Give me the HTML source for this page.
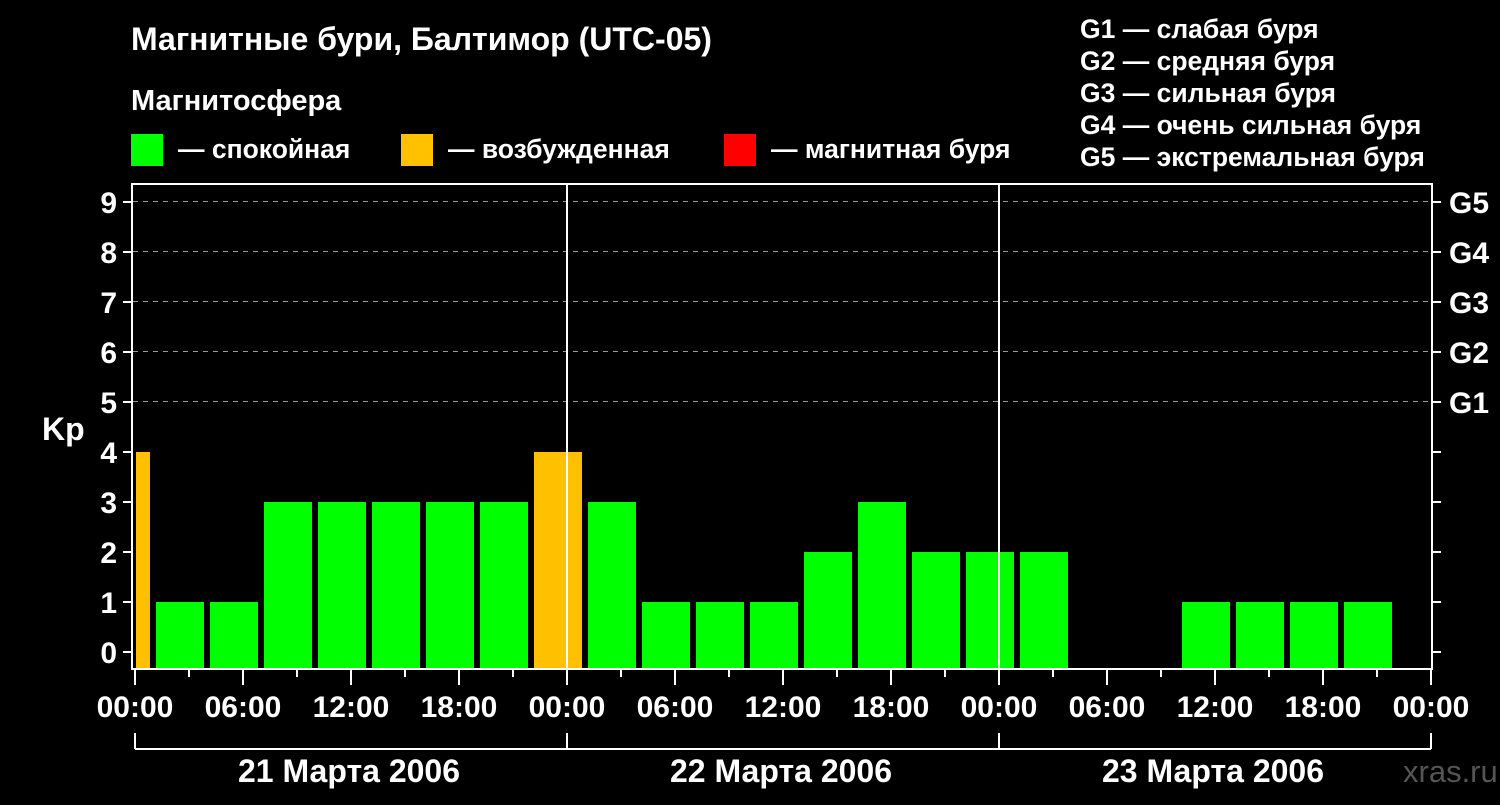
<!DOCTYPE html><html><head><style>body{margin:0;background:#000;width:1500px;height:800px;overflow:hidden}</style></head><body>
<svg width="1500" height="800" xmlns="http://www.w3.org/2000/svg" font-family="Liberation Sans, sans-serif" font-weight="bold" fill="#fff">
<rect width="1500" height="800" fill="#000"/>
<text x="131" y="50" font-size="32">Магнитные бури, Балтимор (UTC-05)</text>
<text x="131" y="110" font-size="29">Магнитосфера</text>
<rect x="131" y="134" width="32" height="32" fill="#00ff00"/><text x="178" y="158" font-size="26.5">— спокойная</text>
<rect x="401" y="134" width="32" height="32" fill="#ffc000"/><text x="448" y="158" font-size="26.5">— возбужденная</text>
<rect x="724" y="134" width="32" height="32" fill="#ff0000"/><text x="771" y="158" font-size="26.5">— магнитная буря</text>
<g font-size="26.5"><text x="1080" y="38">G1 — слабая буря</text><text x="1080" y="70">G2 — средняя буря</text><text x="1080" y="102">G3 — сильная буря</text><text x="1080" y="134">G4 — очень сильная буря</text><text x="1080" y="166">G5 — экстремальная буря</text></g>
<g stroke="#999" stroke-width="1" stroke-dasharray="5,5">
<line x1="133" y1="201.5" x2="1431" y2="201.5"/><line x1="133" y1="251.5" x2="1431" y2="251.5"/><line x1="133" y1="301.5" x2="1431" y2="301.5"/><line x1="133" y1="351.5" x2="1431" y2="351.5"/><line x1="133" y1="401.5" x2="1431" y2="401.5"/></g>
<g fill="#00ff00">
<rect x="156" y="602" width="48" height="66"/><rect x="210" y="602" width="48" height="66"/>
<rect x="264" y="502" width="48" height="166"/><rect x="318" y="502" width="48" height="166"/><rect x="372" y="502" width="48" height="166"/><rect x="426" y="502" width="48" height="166"/><rect x="480" y="502" width="48" height="166"/>
<rect x="588" y="502" width="48" height="166"/>
<rect x="642" y="602" width="48" height="66"/><rect x="696" y="602" width="48" height="66"/><rect x="750" y="602" width="48" height="66"/>
<rect x="804" y="552" width="48" height="116"/><rect x="858" y="502" width="48" height="166"/><rect x="912" y="552" width="48" height="116"/><rect x="966" y="552" width="48" height="116"/><rect x="1020" y="552" width="48" height="116"/>
<rect x="1182" y="602" width="48" height="66"/><rect x="1236" y="602" width="48" height="66"/><rect x="1290" y="602" width="48" height="66"/><rect x="1344" y="602" width="48" height="66"/>
</g>
<g fill="#ffc000"><rect x="136" y="452" width="14" height="216"/><rect x="534" y="452" width="48" height="216"/></g>
<g stroke="#fff" stroke-width="2" fill="none">
<rect x="132" y="184" width="1300" height="485"/>
<line x1="567" y1="184" x2="567" y2="669"/><line x1="999" y1="184" x2="999" y2="669"/>
<path d="M123 202h9M123 252h9M123 302h9M123 352h9M123 402h9M123 452h9M123 502h9M123 552h9M123 602h9M123 652h9M1432 202h9M1432 252h9M1432 302h9M1432 352h9M1432 402h9M1432 452h9M1432 502h9M1432 552h9M1432 602h9M1432 652h9"/>
<path d="M135 669v16M189 669v8M243 669v16M297 669v8M351 669v16M405 669v8M459 669v16M513 669v8M567 669v16M621 669v8M675 669v16M729 669v8M783 669v16M837 669v8M891 669v16M945 669v8M999 669v16M1053 669v8M1107 669v16M1161 669v8M1215 669v16M1269 669v8M1323 669v16M1377 669v8M1431 669v16"/>
<path d="M135 733v16M567 733v16M999 733v16M1431 733v16M135 749h1296"/>
</g>
<g font-size="30" text-anchor="end"><text x="117" y="213">9</text><text x="117" y="263">8</text><text x="117" y="313">7</text><text x="117" y="363">6</text><text x="117" y="413">5</text><text x="117" y="463">4</text><text x="117" y="513">3</text><text x="117" y="563">2</text><text x="117" y="613">1</text><text x="117" y="663">0</text></g>
<text x="42" y="440" font-size="32">Kp</text>
<g font-size="30"><text x="1449" y="213">G5</text><text x="1449" y="263">G4</text><text x="1449" y="313">G3</text><text x="1449" y="363">G2</text><text x="1449" y="413">G1</text></g>
<g font-size="30" text-anchor="middle"><text x="135" y="717">00:00</text><text x="243" y="717">06:00</text><text x="351" y="717">12:00</text><text x="459" y="717">18:00</text><text x="567" y="717">00:00</text><text x="675" y="717">06:00</text><text x="783" y="717">12:00</text><text x="891" y="717">18:00</text><text x="999" y="717">00:00</text><text x="1107" y="717">06:00</text><text x="1215" y="717">12:00</text><text x="1323" y="717">18:00</text><text x="1431" y="717">00:00</text>
<text x="349" y="782" font-size="32">21 Марта 2006</text><text x="781" y="782" font-size="32">22 Марта 2006</text><text x="1213" y="782" font-size="32">23 Марта 2006</text></g>
<text x="1403" y="782" font-size="31" fill="#555" font-weight="normal">xras.ru</text>
</svg></body></html>
